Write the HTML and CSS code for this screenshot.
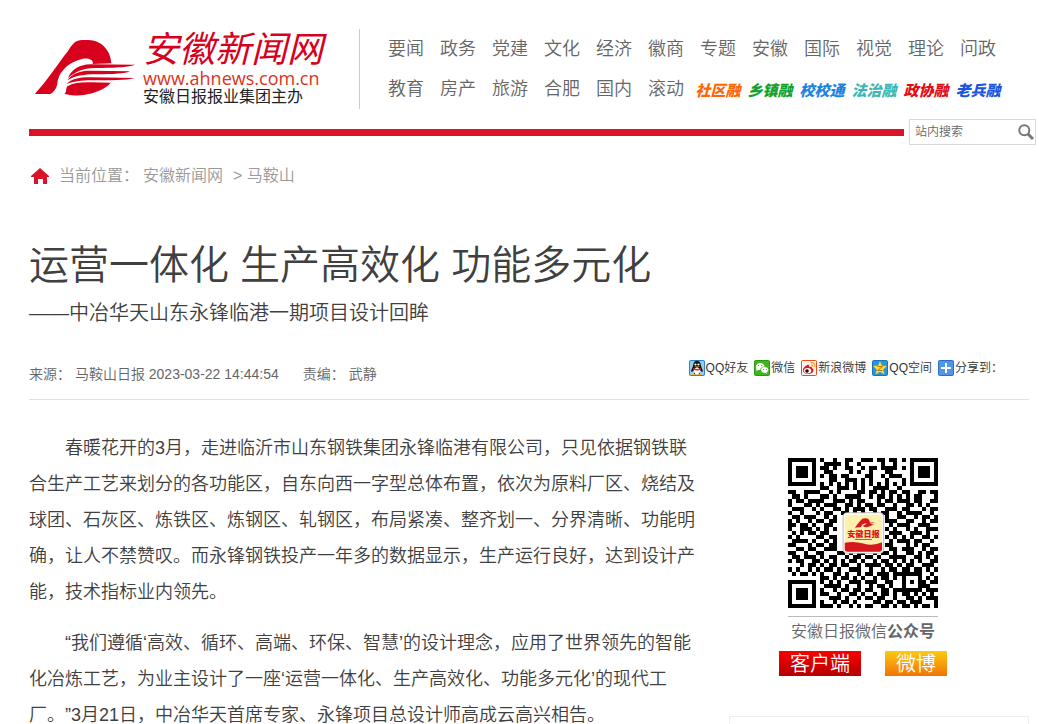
FILE: index.html
```
<!DOCTYPE html>
<html lang="zh-CN">
<head>
    <meta charset="UTF-8">
    <meta name="viewport" content="width=device-width, initial-scale=1.0">
    <title>运营一体化 生产高效化 功能多元化</title>
    <link rel="stylesheet" href="styles.css">
</head>
<body>
    <div class="wrap">
        <header class="header">
            <a class="logo" href="#">
                <svg class="logo-mark" viewBox="9 12 300 168" aria-hidden="true">
                    <g fill="#d7001d">
                        <path d="M8 174C45 135 80 80 108 45C122 22 132 12 150 12H170C205 13 236 40 238 82L182 84C186 72 170 65 150 69C110 78 78 108 76 145C72 160 65 169 55 174Z"/>
                        <path d="M309 86C290 93 260 95 190 96C150 97 130 108 108 126C118 100 145 85 175 85Z"/>
                        <path d="M294 106C280 113 245 115 190 115C155 115 130 119 106 133C120 110 150 103 180 104Z"/>
                        <path d="M308 126C285 134 230 132 180 133C145 133 125 137 104 144C118 127 150 123 180 124Z"/>
                        <path d="M236 140C220 160 185 172 155 177C135 180 112 178 97 173C106 168 100 158 106 151C125 140 150 138 180 139Z"/>
                    </g>
                </svg>
                <span class="logo-text">
                    <span class="logo-name">安徽新闻网</span>
                    <span class="logo-url">www.ahnews.com.cn</span>
                    <span class="logo-org">安徽日报报业集团主办</span>
                </span>
            </a>
            <nav class="nav">
                <div class="nav-row">
                    <a href="#">要闻</a><a href="#">政务</a><a href="#">党建</a><a href="#">文化</a><a href="#">经济</a><a href="#">徽商</a><a href="#">专题</a><a href="#">安徽</a><a href="#">国际</a><a href="#">视觉</a><a href="#">理论</a><a href="#">问政</a>
                </div>
                <div class="nav-row">
                    <a href="#">教育</a><a href="#">房产</a><a href="#">旅游</a><a href="#">合肥</a><a href="#">国内</a><a href="#">滚动</a><a class="rong orange" href="#">社区融</a><a class="rong green" href="#">乡镇融</a><a class="rong blue" href="#">校校通</a><a class="rong teal" href="#">法治融</a><a class="rong red" href="#">政协融</a><a class="rong navy" href="#">老兵融</a>
                </div>
            </nav>
        </header>

        <div class="bar">
            <div class="bar-line"></div>
            <form class="search">
                <input class="search-input" type="text" placeholder="站内搜索" aria-label="站内搜索">
                <button class="search-btn" type="submit" aria-label="搜索">
                    <svg viewBox="0 0 16 16" fill="none" stroke="#777"><circle cx="6.3" cy="6.3" r="5" stroke-width="2"/><path d="M10 10l5 5" stroke-width="3"/></svg>
                </button>
            </form>
        </div>

        <div class="crumb">
            <svg class="home" viewBox="0 0 18 16" aria-hidden="true"><path fill="#db1328" d="M9 0l9 8v1h-2v7h-4v-5H7v5H3V9H0V8z"/></svg>
            <span>当前位置：</span>
            <a href="#">安徽新闻网</a>
            <span class="crumb-last">&gt; <a href="#">马鞍山</a></span>
        </div>

        <h1 class="title">运营一体化 生产高效化 功能多元化</h1>
        <h2 class="subtitle">——中冶华天山东永锋临港一期项目设计回眸</h2>

        <div class="meta">
            <div class="source">
                <span>来源： 马鞍山日报 2023-03-22 14:44:54</span>
                <span>责编： 武静</span>
            </div>
            <div class="share">
                <a href="#">
                    <svg viewBox="0 0 16 16"><rect width="16" height="16" rx="2" fill="#2d84c4"/><rect x="1" y="1" width="14" height="14" rx="1" fill="#8fd0f4"/><path fill="#111" d="M4 6c0-7 8-7 8 0l2 5-1 1-2-2v4H5v-4l-2 2-1-1z"/><ellipse cx="8" cy="11" rx="3" ry="3.2" fill="#fff"/><circle cx="6.5" cy="4.5" r="1.1" fill="#fff"/><circle cx="9.5" cy="4.5" r="1.1" fill="#fff"/><path fill="#f9a91b" d="M5 6.5h6L8 8zM3 14h4v1H3zM9 14h4v1H9z"/><path fill="#e8202a" d="M4 8q4 2 8 0v1.5q-4 2-8 0z"/></svg>QQ好友</a>
                <a href="#">
                    <svg viewBox="0 0 16 16"><rect width="16" height="16" rx="2" fill="#2b9a12"/><rect x="1" y="1" width="14" height="14" rx="1" fill="#40b51f"/><path fill="#fff" d="M2.500 11l-.3-2.500C.8 5 4 3 6 3c3 0 4.500 2 4.500 3.500C8 6.500 6 8 6.300 10L4.500 9.700z"/><path fill="#fff" d="M10.500 7C8.500 7 7 8.300 7 10s2 3 4 2.800l2 1-.4-1.500C16 10 14 7 10.500 7z"/><path fill="#40b51f" d="M4 5h1v1H4zM7 5h1v1H7zM9 9h1v1H9zM12 9h1v1h-1z"/></svg>微信</a>
                <a href="#">
                    <svg viewBox="0 0 16 16"><rect x=".5" y=".5" width="15" height="15" rx="1" fill="#fff3ee" stroke="#e84b22"/><path fill="#d81e2a" d="M2 10c0-3 5-6 6-5 .7.500 0 2 0 2s3-1 3 .7c0 .8 1.500 1 1.500 2.500C12.500 15 2 15.500 2 10z"/><ellipse cx="6.600" cy="10.700" rx="3.600" ry="2.700" fill="#fff"/><circle cx="6" cy="11" r="1.800" fill="#111"/><path fill="none" stroke="#f89b20" stroke-width="1.200" d="M9.500 2.700c3-.7 5 1.500 4.300 4.300M10 5c1.500-.3 2 .5 1.800 1.700"/></svg>新浪微博</a>
                <a href="#">
                    <svg viewBox="0 0 16 16"><rect width="16" height="16" rx="2" fill="#1673bd"/><rect x="1" y="1" width="14" height="14" rx="1" fill="#2597de"/><path fill="#ffd83d" d="M8 1l2 4.700 5 .4-3.800 3.300 1.200 5L8 11.800 3.600 14.400l1.200-5L1 6.100l5-.4z"/><path fill="none" stroke="#c27a00" d="M5.500 6.500h5l-5 4h5"/></svg>QQ空间</a>
                <a href="#">
                    <svg viewBox="0 0 16 16"><rect width="16" height="16" rx="2" fill="#2e70c8"/><rect x="1" y="1" width="14" height="14" rx="1" fill="#5095e8"/><path fill="#fff" d="M7 3h2v4h4v2H9v4H7V9H3V7h4z"/></svg>分享到：</a>
            </div>
        </div>

        <div class="main">
            <article class="article">
                <p>春暖花开的3月，走进临沂市山东钢铁集团永锋临港有限公司，只见依据钢铁联合生产工艺来划分的各功能区，自东向西一字型总体布置，依次为原料厂区、烧结及球团、石灰区、炼铁区、炼钢区、轧钢区，布局紧凑、整齐划一、分界清晰、功能明确，让人不禁赞叹。而永锋钢铁投产一年多的数据显示，生产运行良好，达到设计产能，技术指标业内领先。</p>
                <p>“我们遵循‘高效、循环、高端、环保、智慧’的设计理念，应用了世界领先的智能化冶炼工艺，为业主设计了一座‘运营一体化、生产高效化、功能多元化’的现代工厂。”3月21日，中冶华天首席专家、永锋项目总设计师高成云高兴相告。</p>
            </article>
            <aside class="side">
                <div class="code">
                    <svg class="qr" viewBox="0 0 37 37" role="img" aria-label="安徽日报微信公众号二维码">
                        <path id="qrcells" fill="#000" shape-rendering="crispEdges"/>
                        <rect x="13.600" y="13.500" width="10" height="10" rx="1" fill="#fff" stroke="#aaa" stroke-width=".2"/>
                        <rect x="14" y="14" width="9.200" height="9.100" rx=".6" fill="#fff0ad"/>
                        <path fill="#d7191f" d="M14 20.900q2.300-.5 4.600.2t4.600-.3v1.800q0 .5-.6.500h-8q-.6 0-.6-.5z"/>
                        <path fill="#d7191f" d="M16.500 17.200q1.200-1.800 2-2.300 1.600-.3 1.700 1h1.300l-1.300.3 1 .2-1.500.6q-.8.200-1.300-.2l1-.6q-1-.2-1.400.8z"/>
                        <text class="qr-name" x="18.600" y="19.400">安徽日报</text>
                        <path stroke="#555" stroke-width=".2" d="M16.500 20.100h4.200"/>
                    </svg>
                    <p class="caption">安徽日报微信<b>公众号</b></p>
                    <div class="btns">
                        <a class="btn client" href="#">客户端</a>
                        <a class="btn weibo" href="#">微博</a>
                    </div>
                </div>
                <div class="box"></div>
            </aside>
        </div>
    </div>

    <script>
        const rows=[
            "1111111010010011001110110110101111111",
            "1000001001111010010000010010001000001",
            "1011101011010011001011011110101011101",
            "1011101001100001010010001100001011101",
            "1011101010110110000110010111001011101",
            "1000001000110011101010001000101000001",
            "1111111010101010101010101010101111111",
            "0000000011001110101001111001000000000",
            "1100111100101000011011010110110011011",
            "0110100011010011110010110101010110001",
            "1011011110011101011000101101110110011",
            "1000110101110011010110110010011010100",
            "0111001010011010111011001110110001011",
            "1001000101100110101001011001011110010",
            "0110111001010000000000001001100101101",
            "1010010110110000000000001110011001011",
            "1101101001100000000000000101110011100",
            "1001110101010000000000001010010100111",
            "0101011011000000000000000111001110100",
            "1010000110110000000000001010101001101",
            "0111101001010000000000000101110110010",
            "1100010110110000000000001100010101100",
            "0011011001110000000000000110111001011",
            "1100100110001101011001011010011010110",
            "0110111010110010110110100111100110101",
            "1011001101010101101001011010101010011",
            "0001011010110110010111101101011001110",
            "1010010101101001110010010110110110101",
            "0101101010011010010110111011111110010",
            "0000000011010110101001011010100010101",
            "1111111010101001110111001100101011011",
            "1000001001111010010010110100100011100",
            "1011101010010110110110011011111110111",
            "1011101011001001101001011010110101010",
            "1011101000111010010110110010011010111",
            "1000001010010110100001101101101110001",
            "1111111011101001010110011010110101101"
        ]

        let cells=""
        rows.forEach((row,y)=>{
            for(let x=0;x<row.length;x++){
                if(row[x]==="1"){
                    cells+=`M${x} ${y}h1v1h-1z`
                }
            }
        })
        document.getElementById("qrcells").setAttribute("d",cells)
    </script>
</body>
</html>
```
FILE: styles.css
```
*{
    padding: 0;
    margin: 0;
    box-sizing: border-box;
}
body{
    background-color: #fff;
    color: #404040;
    font-family: "Liberation Sans", "Noto Sans CJK SC", sans-serif;
    font-weight: 350;
    text-spacing-trim: space-all;
}
a{
    color: inherit;
    text-decoration: none;
}
.wrap{
    padding: 28px 10px 0 29px;
}
.header{
    display: flex;
    height: 81px;
}
.logo{
    display: flex;
    width: 331px;
    margin-top: 1px;
    padding-left: 6px;
    gap: 8px;
    border-right: 1px solid #ccc;
}
.logo-mark{
    width: 100px;
    height: 56px;
    margin-top: 11px;
}
.logo-text{
    display: flex;
    flex-direction: column;
}
.logo-name{
    color: #d7001d;
    font-size: 36px;
    font-style: italic;
    font-weight: 400;
    line-height: 42px;
}
.logo-url{
    color: #dc3220;
    font-family: "Open Sans", sans-serif;
    font-size: 18px;
    font-weight: 400;
    line-height: 14px;
}
.logo-org{
    padding-top: 2px;
    color: #222;
    font-size: 16px;
    font-weight: 400;
    line-height: 20px;
}
.nav{
    padding-left: 20px;
}
.nav-row{
    display: flex;
    height: 40px;
    line-height: 42px;
    font-size: 18px;
    color: #666;
}
.nav-row a{
    width: 52px;
    text-align: center;
    white-space: nowrap;
}
.nav-row .rong{
    font-size: 15px;
    font-weight: 900;
    font-style: italic;
    line-height: 46px;
}
.orange{
    color: #ff6600;
}
.green{
    color: #12a22c;
}
.blue{
    color: #1b83e0;
}
.teal{
    color: #3bb8b3;
}
.red{
    color: #e30d17;
}
.navy{
    color: #1b55dd;
}
.bar{
    display: flex;
    align-items: center;
    gap: 5px;
    margin: 10px -7px 0 0;
}
.bar-line{
    flex: 1;
    height: 7px;
    background-color: #db1328;
}
.search{
    display: flex;
    align-items: center;
    width: 127px;
    height: 26px;
    border: 1px solid #d8d8d8;
}
.search-input{
    flex: 1;
    min-width: 0;
    padding-left: 5px;
    border: 0;
    outline: 0;
    font-family: inherit;
    font-size: 12px;
    font-weight: 350;
}
.search-input::placeholder{
    color: #666;
}
.search-btn{
    width: 17px;
    height: 18px;
    border: 0;
    background: none;
    cursor: pointer;
}
.search-btn svg{
    display: block;
    width: 16px;
    height: 16px;
}
.crumb{
    display: flex;
    align-items: center;
    margin-top: 15px;
    padding-left: 2px;
    font-size: 16px;
    line-height: 32px;
    color: #999;
}
.home{
    width: 18px;
    height: 16px;
    margin-right: 10px;
}
.crumb-last{
    margin-left: 10px;
}
.crumb span + a{
    margin-left: 4px;
}
.title{
    margin-top: 43px;
    font-size: 40px;
    font-weight: 350;
    line-height: 60px;
}
.subtitle{
    margin-top: 2px;
    font-size: 20px;
    font-weight: 350;
    line-height: 32px;
}
.meta{
    display: flex;
    justify-content: space-between;
    align-items: flex-start;
    margin-top: 29px;
    padding: 0 26px 15px 0;
    border-bottom: 1px solid #e2e2e2;
}
.source{
    display: flex;
    gap: 24px;
    padding-top: 6px;
    font-size: 14px;
    line-height: 20px;
    color: #666;
}
.share{
    display: flex;
    gap: 6px;
    font-size: 12px;
    line-height: 20px;
    color: #333;
}
.share a{
    display: flex;
    align-items: center;
    gap: 1px;
}
.share svg{
    width: 16px;
    height: 16px;
}
.main{
    display: flex;
    justify-content: space-between;
    padding-top: 30px;
}
.article{
    width: 67%;
}
.article p{
    margin-bottom: 15px;
    font-size: 18px;
    line-height: 36px;
    text-indent: 2em;
}
.side{
    width: 300px;
}
.code{
    width: 168px;
    margin-left: 50px;
    padding-top: 28px;
}
.qr{
    display: block;
    width: 150px;
    height: 150px;
    margin: 0 auto 8px;
}
.qr-name{
    fill: #d7191f;
    font-size: 2px;
    font-weight: 900;
    text-anchor: middle;
}
.caption{
    width: 150px;
    margin: 0 auto;
    border-top: 1px solid #bbb;
    font-size: 16px;
    line-height: 30px;
    text-align: center;
    color: #666;
}
.caption b{
    font-weight: 700;
}
.btns{
    display: flex;
    justify-content: space-between;
    margin-top: 4px;
}
.btn{
    height: 25px;
    padding: 0 11px;
    font-size: 20px;
    line-height: 26px;
    color: #fff;
}
.client{
    background: linear-gradient(#fb0000, #b40000);
}
.weibo{
    background: linear-gradient(#fdc910, #f27405);
}
.box{
    height: 60px;
    margin-top: 40px;
    border: 1px solid #eee;
}
```
